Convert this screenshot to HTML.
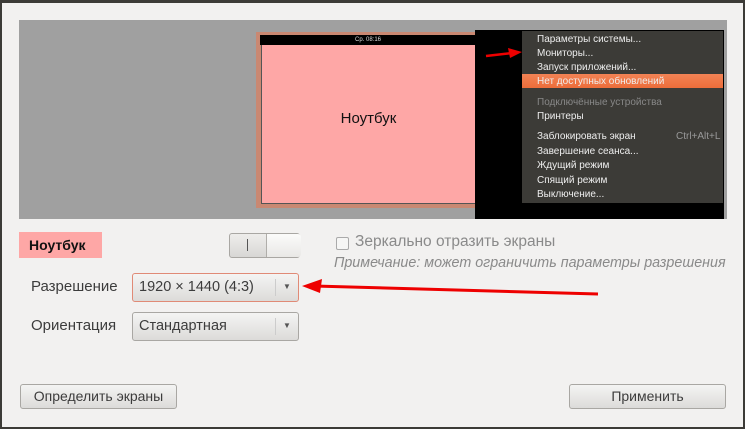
<!DOCTYPE html>
<html><head><meta charset="utf-8"><style>
body{margin:0;width:745px;height:429px;position:relative;overflow:hidden;background:#f2f1f0;font-family:"Liberation Sans","DejaVu Sans",sans-serif;}
.a{position:absolute}
.btn{position:absolute;background:linear-gradient(#f4f4f3,#dcdbd9);border:1px solid #a9a7a3;border-radius:3px;font-size:14px;color:#3c3c3c;text-align:center;box-sizing:border-box}
.menu div{position:absolute;left:15px;font-size:10px;color:#eee;white-space:nowrap}
</style></head><body>
<div class="a" style="left:0;top:0;width:745px;height:3px;background:#3c3b37"></div>
<div class="a" style="left:0;top:0;width:2px;height:429px;background:#3c3b37"></div>
<div class="a" style="right:0;top:0;width:2px;height:429px;background:#3c3b37"></div>
<div class="a" style="left:0;bottom:0;width:745px;height:2px;background:#3c3b37"></div>

<div class="a" style="left:19px;top:20px;width:708px;height:199px;background:#a0a0a0"></div>
<div class="a" style="left:256px;top:32px;width:220px;height:176px;background:#c98872"></div>
<div class="a" style="left:260px;top:35px;width:216px;height:10px;background:#000;color:#ddd;font-size:6px;text-align:center;line-height:10px">Ср. 08:16</div>
<div class="a" style="left:261px;top:45px;width:215px;height:159px;background:#fea7a6;border-left:1px solid #555;border-bottom:1px solid #555;box-sizing:border-box"></div>
<div class="a" style="left:261px;top:110px;width:215px;text-align:center;font-size:15px;color:#111">Ноутбук</div>
<div class="a" style="left:475px;top:30px;width:249px;height:189px;background:#000"></div>
<div class="a menu" style="left:522px;top:31px;width:201px;height:172px;background:#3c3b37">
<div style="top:3px">Параметры системы...</div>
<div style="top:17px">Мониторы...</div>
<div style="top:31px">Запуск приложений...</div>
<div style="top:43px;left:0;width:201px;height:14px;background:linear-gradient(#f28355,#ec6d3a)"><span style="position:absolute;left:15px;top:2px">Нет доступных обновлений</span></div>
<div style="top:66px;color:#888">Подключённые устройства</div>
<div style="top:80px">Принтеры</div>
<div style="top:100px">Заблокировать экран</div>
<div style="top:100px;left:154px;color:#999">Ctrl+Alt+L</div>
<div style="top:115px">Завершение сеанса...</div>
<div style="top:129px">Ждущий режим</div>
<div style="top:144px">Спящий режим</div>
<div style="top:158px">Выключение...</div>
</div>
<svg class="a" style="left:484px;top:46px" width="40" height="14"><path d="M2 10 L28 7" stroke="#e00" stroke-width="2.5"/><path d="M24 2 L38 6 L26 12 Z" fill="#e00"/></svg>

<div class="a" style="left:19px;top:232px;width:83px;height:26px;background:#fea7a6;font-weight:bold;font-size:14px;line-height:26px;text-indent:10px;color:#111">Ноутбук</div>
<div class="btn" style="left:229px;top:233px;width:71px;height:25px;background:linear-gradient(#eeedeb,#d8d7d5)"></div>
<div class="a" style="left:266px;top:234px;width:34px;height:23px;background:linear-gradient(#fbfbfa,#e9e8e6);border-left:1px solid #b0aeaa;border-radius:0 3px 3px 0"></div>
<div class="a" style="left:247px;top:239px;width:1px;height:12px;background:#555"></div>
<div class="a" style="left:336px;top:237px;width:11px;height:11px;border:1px solid #aaa;border-radius:2px;background:#f6f6f5"></div>
<div class="a" style="left:355px;top:233px;font-size:15.5px;color:#8a8a8a">Зеркально отразить экраны</div>
<div class="a" style="left:334px;top:255px;font-size:14.3px;color:#8a8a8a;font-style:italic">Примечание: может ограничить параметры разрешения</div>

<div class="a" style="left:31px;top:278px;font-size:15px;color:#3c3c3c">Разрешение</div>
<div class="btn" style="left:132px;top:273px;width:167px;height:29px;border-color:#e08a76;text-align:left;padding-left:6px;line-height:27px;font-size:14.5px">1920 × 1440 (4:3)</div>
<div class="a" style="left:275px;top:279px;width:1px;height:17px;background:#ccc"></div>
<div class="a" style="left:283px;top:282px;font-size:8px;color:#555">▼</div>
<svg class="a" style="left:300px;top:278px" width="300" height="22"><path d="M14 8 L298 16" stroke="#e00" stroke-width="3"/><path d="M2 8 L22 1 L20 15 Z" fill="#e00"/></svg>

<div class="a" style="left:31px;top:317px;font-size:15px;color:#3c3c3c">Ориентация</div>
<div class="btn" style="left:132px;top:312px;width:167px;height:29px;text-align:left;padding-left:6px;line-height:27px;font-size:14.5px">Стандартная</div>
<div class="a" style="left:275px;top:318px;width:1px;height:17px;background:#ccc"></div>
<div class="a" style="left:283px;top:321px;font-size:8px;color:#555">▼</div>

<div class="btn" style="left:20px;top:384px;width:157px;height:25px;line-height:23px">Определить экраны</div>
<div class="btn" style="left:569px;top:384px;width:157px;height:25px;line-height:23px">Применить</div>
</body></html>
